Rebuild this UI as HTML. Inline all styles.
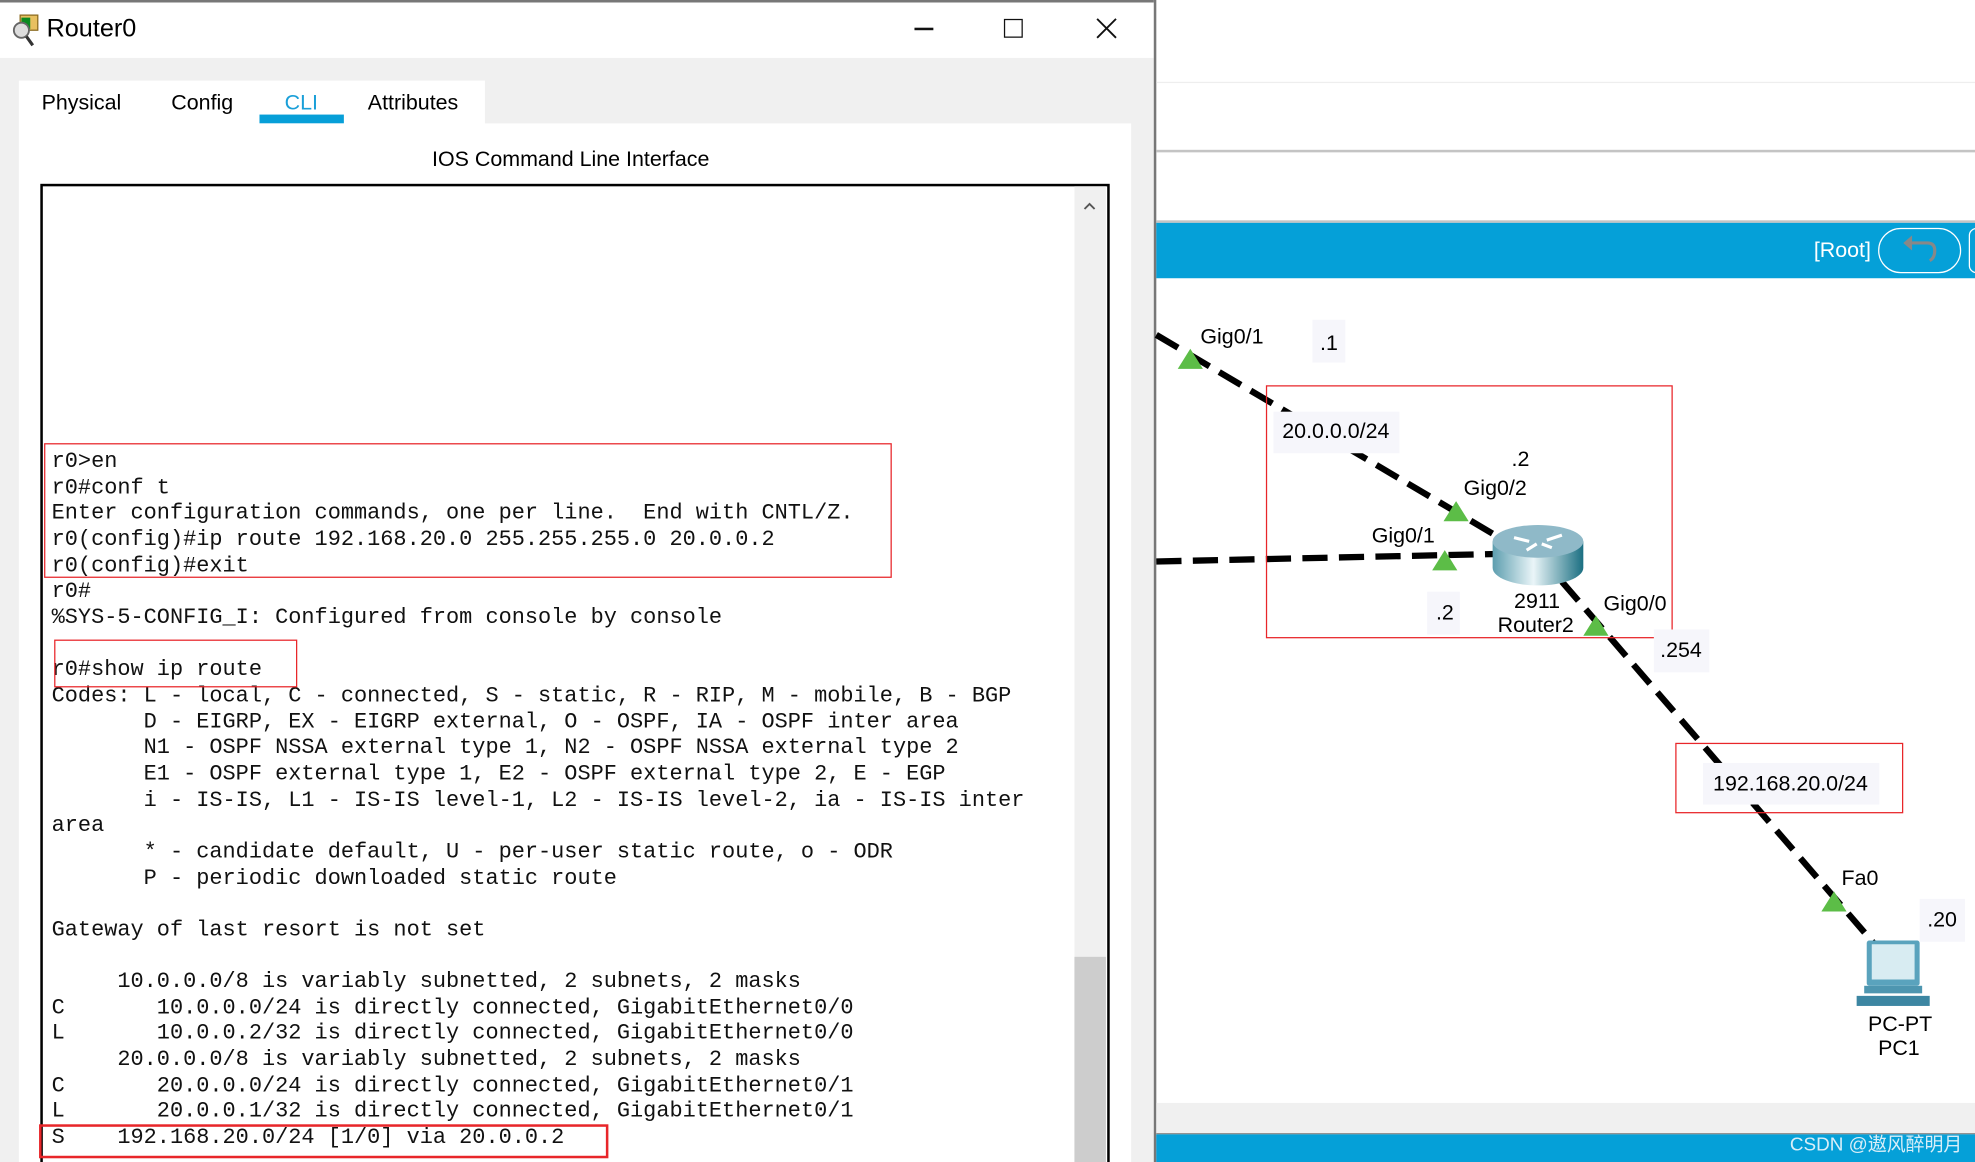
<!DOCTYPE html>
<html><head><meta charset="utf-8"><style>
html,body{margin:0;padding:0;width:1975px;height:1162px;overflow:hidden;background:#fff}
#s{position:absolute;left:0;top:0;width:1568px;height:923px;overflow:hidden;transform:scale(1.2596,1.2590);transform-origin:0 0;font-family:"Liberation Sans",sans-serif;}
.a{position:absolute}
.t{position:absolute;white-space:pre;font-family:"Liberation Mono",monospace;font-size:17.4px;line-height:20.65px;color:#111;left:41px;top:358px}
.lb{position:absolute;font-size:17px;color:#000;white-space:nowrap}
.red{position:absolute;border:1px solid #e8262a}
.tri{position:absolute;width:0;height:0;border-left:10px solid transparent;border-right:10px solid transparent;border-bottom:16px solid #5cbd47}
</style></head><body><div id="s">
<div class="a" style="left:0;top:0;width:916px;height:923px;background:#f0f0f0"></div>
<div class="a" style="left:0;top:0;width:916px;height:2px;background:#777"></div>
<div class="a" style="left:0;top:2px;width:916px;height:44px;background:#fff"></div>
<svg class="a" style="left:7px;top:10px" width="26" height="30"><rect x="9" y="2" width="14" height="12" fill="#e8c060" stroke="#8a6a20"/><rect x="10" y="4" width="7" height="9" fill="#0a8a20"/><circle cx="10" cy="14" r="6" fill="#ddd" stroke="#666" stroke-width="1.5"/><line x1="14" y1="19" x2="19" y2="26" stroke="#333" stroke-width="2.5"/></svg>
<div class="lb" style="left:37px;top:12px;font-size:20px">Router0</div>
<div class="a" style="left:726px;top:22px;width:15px;height:1.5px;background:#111"></div>
<div class="a" style="left:797px;top:15px;width:13px;height:13px;border:1.5px solid #111"></div>
<svg class="a" style="left:870px;top:14px" width="17" height="17"><path d="M1 1L16 16M16 1L1 16" stroke="#111" stroke-width="1.5"/></svg>
<div class="a" style="left:15px;top:64px;width:370px;height:35px;background:#fff"></div>
<div class="lb" style="left:33px;top:72px">Physical</div>
<div class="lb" style="left:136px;top:72px">Config</div>
<div class="lb" style="left:226px;top:72px;color:#1a9fd8">CLI</div>
<div class="a" style="left:206px;top:91px;width:67px;height:7px;background:#079fd8"></div>
<div class="lb" style="left:292px;top:72px">Attributes</div>
<div class="a" style="left:15px;top:98px;width:883px;height:825px;background:#fff"></div>
<div class="lb" style="left:343px;top:117px;font-size:17px">IOS Command Line Interface</div>
<div class="a" style="left:32px;top:146px;width:845px;height:800px;border:2px solid #000;background:#fff"></div>
<div class="a" style="left:853px;top:148px;width:25px;height:775px;background:#f0f0f0"></div>
<div class="a" style="left:853px;top:760px;width:25px;height:163px;background:#cdcdcd"></div>
<svg class="a" style="left:859px;top:159px" width="12" height="10"><path d="M2 7L6 3L10 7" stroke="#555" stroke-width="1.5" fill="none"/></svg>
<div class="t">r0&gt;en
r0#conf t
Enter configuration commands, one per line.  End with CNTL/Z.
r0(config)#ip route 192.168.20.0 255.255.255.0 20.0.0.2
r0(config)#exit
r0#
%SYS-5-CONFIG_I: Configured from console by console

r0#show ip route
Codes: L - local, C - connected, S - static, R - RIP, M - mobile, B - BGP
       D - EIGRP, EX - EIGRP external, O - OSPF, IA - OSPF inter area
       N1 - OSPF NSSA external type 1, N2 - OSPF NSSA external type 2
       E1 - OSPF external type 1, E2 - OSPF external type 2, E - EGP
       i - IS-IS, L1 - IS-IS level-1, L2 - IS-IS level-2, ia - IS-IS inter
area
       * - candidate default, U - per-user static route, o - ODR
       P - periodic downloaded static route

Gateway of last resort is not set

     10.0.0.0/8 is variably subnetted, 2 subnets, 2 masks
C       10.0.0.0/24 is directly connected, GigabitEthernet0/0
L       10.0.0.2/32 is directly connected, GigabitEthernet0/0
     20.0.0.0/8 is variably subnetted, 2 subnets, 2 masks
C       20.0.0.0/24 is directly connected, GigabitEthernet0/1
L       20.0.0.1/32 is directly connected, GigabitEthernet0/1
S    192.168.20.0/24 [1/0] via 20.0.0.2</div>
<div class="red" style="left:35px;top:352px;width:671px;height:105px"></div>
<div class="red" style="left:43px;top:508px;width:191px;height:36px"></div>
<div class="red" style="left:31px;top:893px;width:448px;height:23px;border-width:2px"></div>
<div class="a" style="left:916px;top:0;width:2px;height:923px;background:#777"></div>
<div class="a" style="left:918px;top:65px;width:650px;height:1px;background:#eee"></div>
<div class="a" style="left:918px;top:119px;width:650px;height:2px;background:#c4c4c4"></div>
<div class="a" style="left:918px;top:175px;width:650px;height:2px;background:#c4c4c4"></div>
<div class="a" style="left:918px;top:177px;width:650px;height:44px;background:#05a0d8"></div>
<div class="lb" style="left:1440px;top:189px;color:#fff;font-size:17px">[Root]</div>
<div class="a" style="left:1491px;top:181px;width:64px;height:34px;border:1.5px solid #fff;border-radius:18px"></div>
<svg class="a" style="left:1508px;top:186px" width="34" height="26"><path d="M8 7H22Q28 7 28 13Q28 19 24 21" stroke="#888" stroke-width="2.5" fill="none"/><path d="M3 7L10 1V13Z" fill="#888"/></svg>
<div class="a" style="left:1563px;top:181px;width:10px;height:34px;border:1.5px solid #fff;border-radius:18px"></div>
<div class="a" style="left:918px;top:876px;width:650px;height:25px;background:#f0f0f0"></div>
<div class="a" style="left:918px;top:900px;width:650px;height:1px;background:#888"></div>
<div class="a" style="left:918px;top:901px;width:650px;height:22px;background:#05a0d8"></div>
<div class="lb" style="left:1421px;top:898px;color:#d8eef8;font-size:15px;font-family:'Liberation Sans','Noto Sans CJK SC',sans-serif">CSDN @遨风醉明月</div>
<svg class="a" style="left:0;top:0" width="1568" height="923">
<g stroke="#000" stroke-width="5" stroke-dasharray="20 9" fill="none">
<path d="M918 266L1192 428"/><path d="M918 446L1188 440"/><path d="M1240 462L1490 752"/></g>
</svg>
<div class="red" style="left:1005px;top:306px;width:321px;height:199px"></div>
<div class="red" style="left:1330px;top:590px;width:179px;height:54px"></div>
<div class="a" style="left:1011px;top:327px;width:100px;height:33px;background:#f6f6fb"></div>
<div class="lb" style="left:1018px;top:333px">20.0.0.0/24</div>
<div class="a" style="left:1352px;top:606px;width:140px;height:33px;background:#f6f6fb"></div>
<div class="lb" style="left:1360px;top:613px">192.168.20.0/24</div>
<div class="lb" style="left:953px;top:258px">Gig0/1</div>
<div class="a" style="left:1042px;top:254px;width:26px;height:34px;background:#f6f6fb"></div>
<div class="lb" style="left:1048px;top:263px">.1</div>
<div class="lb" style="left:1200px;top:355px">.2</div>
<div class="lb" style="left:1162px;top:378px">Gig0/2</div>
<div class="lb" style="left:1089px;top:416px">Gig0/1</div>
<div class="a" style="left:1133px;top:470px;width:26px;height:34px;background:#f6f6fb"></div>
<div class="lb" style="left:1140px;top:477px">.2</div>
<div class="lb" style="left:1202px;top:468px">2911</div>
<div class="lb" style="left:1189px;top:487px">Router2</div>
<div class="lb" style="left:1273px;top:470px">Gig0/0</div>
<div class="a" style="left:1313px;top:500px;width:44px;height:34px;background:#f6f6fb"></div>
<div class="lb" style="left:1318px;top:507px">.254</div>
<div class="lb" style="left:1462px;top:688px">Fa0</div>
<div class="a" style="left:1524px;top:714px;width:36px;height:34px;background:#f6f6fb"></div>
<div class="lb" style="left:1530px;top:721px">.20</div>
<div class="lb" style="left:1483px;top:804px">PC-PT</div>
<div class="lb" style="left:1491px;top:823px">PC1</div>
<div class="tri" style="left:935px;top:277px"></div>
<div class="tri" style="left:1146px;top:398px"></div>
<div class="tri" style="left:1137px;top:437px"></div>
<div class="tri" style="left:1257px;top:489px"></div>
<div class="tri" style="left:1446px;top:708px"></div>
<svg class="a" style="left:1184px;top:415px" width="74" height="52">
<defs><linearGradient id="g" x1="0" x2="1"><stop offset="0" stop-color="#5d9eaf"/><stop offset=".45" stop-color="#eaf5f8"/><stop offset="1" stop-color="#1b6f82"/></linearGradient></defs>
<path d="M1 15V36A36 14 0 0 0 73 36V15Z" fill="url(#g)"/>
<ellipse cx="37" cy="15" rx="36" ry="13" fill="#8fb9c8"/>
<path d="M18 12L30 15M56 10L44 14M28 22L36 17M48 20L40 17" stroke="#fff" stroke-width="2.5"/></svg>
<svg class="a" style="left:1472px;top:745px" width="70" height="58">
<rect x="10" y="2" width="42" height="36" rx="2" fill="#5aa3bd"/><rect x="14" y="5" width="34" height="28" fill="#d8ecf2"/>
<rect x="8" y="38" width="46" height="6" fill="#4e96b0"/><rect x="2" y="46" width="58" height="8" fill="#3c86a2"/></svg>
</div></body></html>
